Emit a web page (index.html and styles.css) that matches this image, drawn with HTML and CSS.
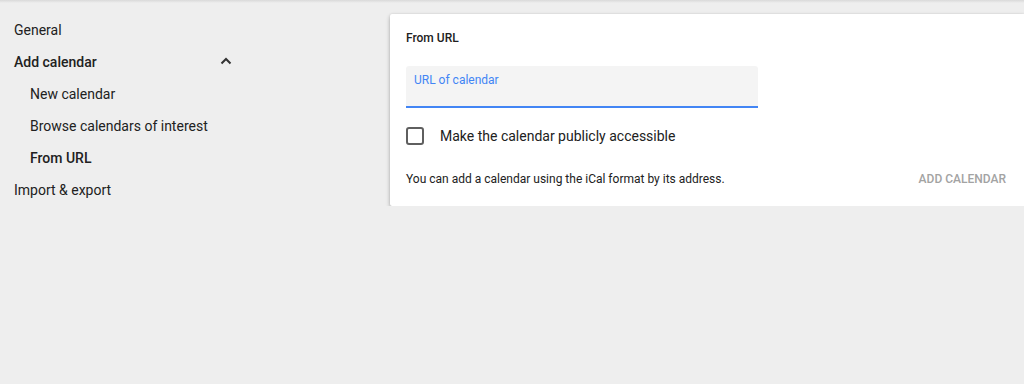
FILE: index.html
```html
<!DOCTYPE html>
<html lang="en">
<head>
    <meta charset="UTF-8">
    <title>Settings - From URL</title>
    <link rel="stylesheet" href="styles.css">
</head>
<body>
    <div class="topshade"></div>
    <div class="page">
        <div class="sidebar">
            <a class="nav-item">General</a>
            <a class="nav-item active-group">
                <span>Add calendar</span>
                <svg class="chevron" width="12" height="8" viewBox="0 0 12 8">
                    <path d="M1.5 6.5 L6 2 L10.5 6.5" fill="none" stroke="#333" stroke-width="2"/>
                </svg>
            </a>
            <a class="nav-item sub">New calendar</a>
            <a class="nav-item sub">Browse calendars of interest</a>
            <a class="nav-item sub current">From URL</a>
            <a class="nav-item">Import &amp; export</a>
        </div>

        <div class="card">
            <h3 class="card-title">From URL</h3>
            <div class="field">
                <label class="field-label">URL of calendar</label>
            </div>
            <div class="check-row">
                <span class="checkbox"></span>
                <span class="check-label">Make the calendar publicly accessible</span>
            </div>
            <div class="card-footer">
                <span class="hint">You can add a calendar using the iCal format by its address.</span>
                <button class="add-btn">ADD CALENDAR</button>
            </div>
        </div>
    </div>
</body>
</html>
```

FILE: styles.css
```css
body {
    font-family: Roboto, 'Liberation Sans', sans-serif;
    margin: 0;
    background-color: #eeeeee;
    color: #212121;
    overflow: hidden;
}
.topshade {
    height: 3px;
    background: linear-gradient(#d9d9d9, #eeeeee);
}
.page {
    display: flex;
    align-items: flex-start;
}
.sidebar {
    width: 240px;
    padding-top: 11px;
    flex-shrink: 0;
}
.nav-item {
    display: flex;
    align-items: center;
    justify-content: space-between;
    height: 32px;
    padding: 0 6px 0 14px;
    font-size: 14px;
    color: #212121;
    text-decoration: none;
}
.nav-item.sub {
    padding-left: 30px;
}
.active-group,
.current {
    font-weight: 500;
}
.chevron {
    margin-right: 2px;
    margin-top: -2px;
}
.card {
    flex: 1;
    margin-left: 150px;
    margin-top: 11px;
    height: 192px;
    box-sizing: border-box;
    background: #fff;
    border-radius: 2px 0 0 2px;
    box-shadow: 0 2px 4px rgba(0, 0, 0, 0.28), 0 0 2px rgba(0, 0, 0, 0.1);
    padding: 17px 18px 0 16px;
}
.card-title {
    margin: 0;
    font-size: 12px;
    font-weight: 500;
    line-height: 14px;
    color: #212121;
}
.field {
    margin-top: 21px;
    width: 352px;
    height: 42px;
    box-sizing: border-box;
    background: #f4f4f4;
    border-radius: 3px 3px 0 0;
    border-bottom: 2px solid #4285f4;
    padding: 3px 8px 0;
}
.field-label {
    font-size: 12px;
    color: #4285f4;
}
.check-row {
    display: flex;
    align-items: center;
    margin-top: 19px;
}
.checkbox {
    width: 18px;
    height: 18px;
    box-sizing: border-box;
    border: 2px solid #5f5f5f;
    border-radius: 3px;
}
.check-label {
    margin-left: 16px;
    font-size: 14px;
    color: #212121;
}
.card-footer {
    display: flex;
    justify-content: space-between;
    align-items: center;
    margin-top: 27px;
}
.hint {
    font-size: 12px;
    color: #212121;
}
.add-btn {
    background: none;
    border: none;
    padding: 0;
    font-family: inherit;
    font-size: 12px;
    font-weight: 500;
    color: #a3a3a3;
    cursor: default;
}
```
